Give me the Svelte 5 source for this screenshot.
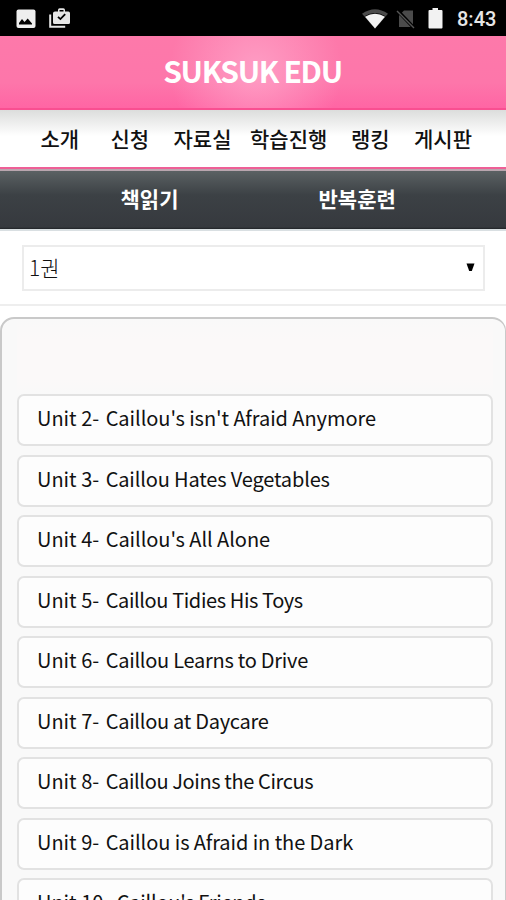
<script>
    const menu = ['소개', '신청', '자료실', '학습진행', '랭킹', '게시판'];
    const tabs = ['책읽기', '반복훈련'];

    // tracking: letter spacing of the title, in px
    const units = [
        { no: 2, title: "Caillou's isn't Afraid Anymore", tracking: -0.06 },
        { no: 3, title: 'Caillou Hates Vegetables', tracking: -0.16 },
        { no: 4, title: "Caillou's All Alone", tracking: -0.05 },
        { no: 5, title: 'Caillou Tidies His Toys', tracking: -0.39 },
        { no: 6, title: 'Caillou Learns to Drive', tracking: -0.26 },
        { no: 7, title: 'Caillou at Daycare', tracking: -0.28 },
        { no: 8, title: 'Caillou Joins the Circus', tracking: -0.38 },
        { no: 9, title: 'Caillou is Afraid in the Dark', tracking: -0.07 },
        { no: 10, title: "Caillou's Friends", tracking: -0.25 }
    ];
</script>

<div class="screen">
    <div class="status">
        <svg class="photo" width="20" height="20" viewBox="0 0 20 20">
            <rect x="0.5" y="0.5" width="19" height="18.5" rx="2" fill="#eee" />
            <path d="M3 15.5V14l3-4 2.500 3 3.200-3.500 4.300 5v1z" fill="#000" />
        </svg>
        <svg class="task" width="22" height="21" viewBox="0 0 22 21">
            <path d="M1.2 6.5v12.3h15" fill="none" stroke="#e6e6e6" stroke-width="2" />
            <path d="M6 3.5h3V2q0-1.700 1.700-1.700h3.600Q16 .3 16 2v1.500h3.300Q21 3.500 21 5.200v9.300q0 1.500-1.500 1.500h-14Q4 16 4 14.500V5.200Q4 3.500 6 3.500z" fill="#e6e6e6" />
            <path d="M10.500 2h4v1.500h-4z" fill="#000" />
            <path d="m9 8.800 2.400 2.300 4.800-5" fill="none" stroke="#000" stroke-width="1.800" />
        </svg>
        <svg class="wifi" width="28" height="20" viewBox="0 0 28 20">
            <path d="M1 4.800Q14-4.500 27 4.800L14 19.500z" fill="#4b4b4b" />
            <path d="M3.500 7.300Q14 .8 24.500 7.300L14 19.500z" fill="#000" />
            <path d="M4 7.800Q14 1.600 24 7.800L14 19.500z" fill="#f2f2f2" />
        </svg>
        <svg class="sim" width="20" height="20" viewBox="0 0 20 20">
            <path d="M8 1.500h9v16.500H3V6.500z" fill="#4b4b4b" />
            <path d="m1 1 17 18" stroke="#000" stroke-width="3.500" />
            <path d="m1 2 17 17" stroke="#555" stroke-width="1.500" />
        </svg>
        <svg class="battery" width="15" height="21" viewBox="0 0 15 21">
            <path d="M4.500 0h5.500v2h3.500Q14.500 2 14.500 3v16.500q0 1-1 1H1.500q-1 0-1-1V3q0-1 1-1h3z" fill="#f2f2f2" />
        </svg>
        <span class="clock">8:43</span>
    </div>

    <header>
        <h1>SUKSUK EDU</h1>
    </header>

    <nav class="menu">
        {#each menu as item}
            <span>{item}</span>
        {/each}
    </nav>

    <nav class="tabs">
        {#each tabs as tab}
            <span>{tab}</span>
        {/each}
    </nav>

    <div class="picker">
        <div class="select">
            <span>1권</span>
            <svg width="9" height="9" viewBox="0 0 9 9"><path d="M0.500 0.500h8L5.800 8H3.200z" /></svg>
        </div>
    </div>

    <main>
        <div class="notice"></div>
        <ul>
            {#each units as unit}
                <li>
                    <span class="no">Unit {unit.no}-</span>
                    <span style="letter-spacing: {unit.tracking}px">{unit.title}</span>
                </li>
            {/each}
        </ul>
    </main>
</div>

<style>
    :global(body) {
        background: #fff;
    }

    .screen {
        width: 506px;
        height: 900px;
        overflow: hidden;
        display: flex;
        flex-direction: column;
        font-family: "Noto Sans CJK KR", sans-serif;
        color: #111;
        white-space: nowrap;
    }

    .screen > * {
        box-sizing: border-box;
        flex-shrink: 0;
    }

    .status {
        height: 36px;
        padding: 1px 10px 0 16px;
        background: #000;
        display: flex;
        align-items: center;
    }

    .task {
        margin-left: 13px;
    }

    .wifi {
        margin-left: auto;
    }

    .sim {
        margin-left: 7px;
    }

    .battery {
        margin-left: 12px;
    }

    .clock {
        width: 39px;
        margin-left: 14px;
        padding-top: 1px;
        font-family: Roboto, sans-serif;
        font-size: 20px;
        font-weight: 500;
        line-height: 24px;
        color: #e6e6e6;
    }

    header {
        height: 74px;
        padding-right: 1px;
        border-bottom: 2px solid #f94f91;
        background:
            radial-gradient(circle 86px at 256px 34px, rgba(255, 170, 205, 0.75), rgba(255, 150, 190, 0)),
            linear-gradient(#fd79aa, #fd76aa 65%, #ff65a4);
        display: flex;
        justify-content: center;
    }

    h1 {
        margin: 0;
        font-size: 30px;
        font-weight: 700;
        line-height: 69px;
        letter-spacing: -1.350px;
        color: #fff;
    }

    .menu {
        height: 61px;
        padding-left: 40.500px;
        border-bottom: 2px solid #b9a5ae;
        background: linear-gradient(#dcdddc, #fff 26px);
        display: grid;
        grid-template-columns: 70px 63px 76.5px 101px 63px auto;
        font-size: 21px;
        font-weight: 500;
        line-height: 56px;
        box-shadow: inset 0 -2px #ee5f96;
    }

    .tabs {
        height: 60px;
        padding-left: 120.500px;
        border-bottom: 2px solid #d9dfe2;
        background: linear-gradient(#5b6163, #3c4145 24px, #36393e 56px, #202327 58px);
        display: grid;
        grid-template-columns: 198px auto;
        font-size: 21px;
        font-weight: 700;
        line-height: 54px;
        color: #fff;
    }

    .picker {
        height: 75px;
        padding: 14px 21px 14px 22px;
        border-bottom: 2px solid #eee;
    }

    .select {
        box-sizing: border-box;
        height: 46px;
        padding: 0 8px 2px 5px;
        border: 2px solid #ececec;
        display: flex;
        align-items: center;
        justify-content: space-between;
        font-size: 21px;
        font-weight: 300;
    }

    main {
        height: 640px;
        margin-top: 11px;
        padding: 0 12px 0 15px;
        border: 2px solid #c9c9c9;
        border-right-width: 1px;
        border-radius: 14px;
        background: #f9f9f9;
    }

    .notice {
        height: 75px;
        background: linear-gradient(#f9f9f9, #fbf9f9 20px, #fbf9f9 60px, #f9f9f9);
    }

    ul {
        margin: 0;
        padding: 0;
        list-style: none;
        display: grid;
        gap: 8.500px;
    }

    li {
        box-sizing: border-box;
        height: 52px;
        padding-left: 18px;
        border: 2px solid #e2e2e2;
        border-radius: 7px;
        background: #fdfdfd;
        font-size: 20px;
        line-height: 44px;
    }

    .no {
        margin-right: 2px;
    }
</style>
